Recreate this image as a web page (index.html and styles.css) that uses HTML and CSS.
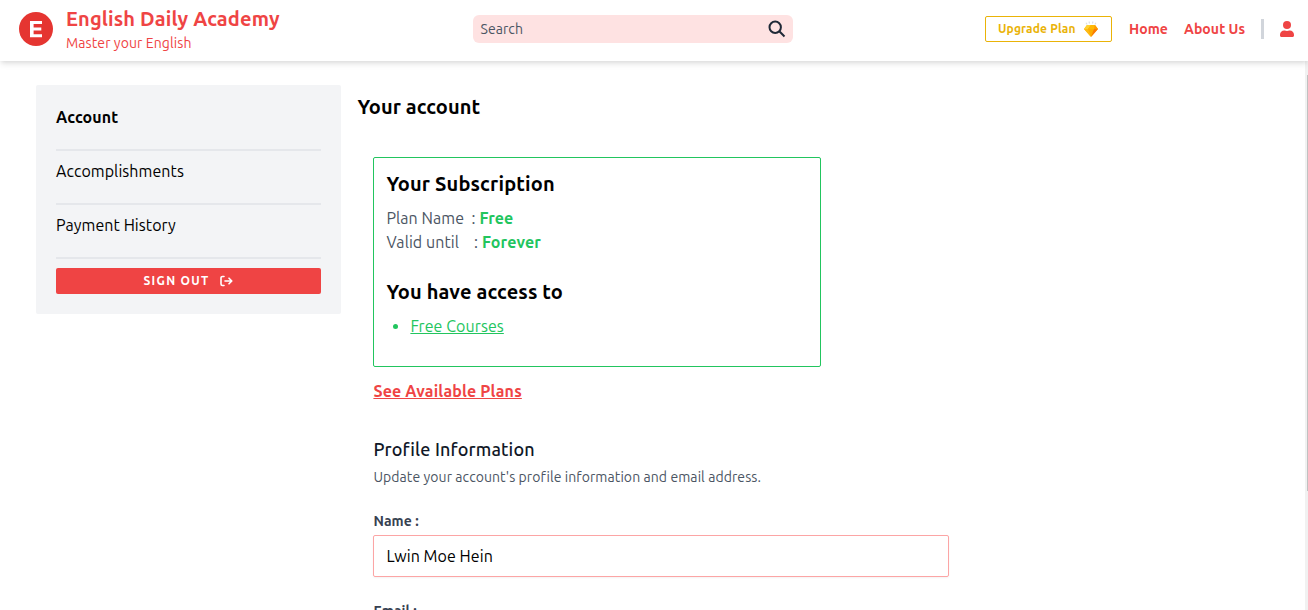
FILE: index.html
```html
<!DOCTYPE html>
<html lang="en">
<head>
<meta charset="utf-8">
<title>English Daily Academy</title>
<link rel="stylesheet" href="styles.css">
</head>
<body>
<header class="topbar">
  <a class="brand">
    <span class="logo"><svg width="34" height="34" viewBox="0 0 34 34"><circle cx="17" cy="17" r="17" fill="#e53531"/><path d="M11 9h12v3h-8.400v3.500h7.700v3h-7.700v3.700H23v3H11z" fill="#fff"/></svg></span>
    <span class="brand-text">
      <span class="brand-name">English Daily Academy</span>
      <span class="brand-tag">Master your English</span>
    </span>
  </a>
  <div class="search">
    <span class="search-label">Search</span>
    <svg width="18" height="18" viewBox="0 0 18 18" fill="none" stroke="#1f2937" stroke-width="2"><circle cx="7.200" cy="7.200" r="5.700"/><path d="M11.300 11.300L16.500 16.500"/></svg>
  </div>
  <nav class="nav">
    <a class="upgrade"><span class="upgrade-label">Upgrade Plan</span>
      <svg width="16" height="17" viewBox="0 0 16 17"><path d="M4.200 3.500L3 1.700M6.500 2.500L6 .5M9.500 2.500L10 .5M11.800 3.500L13 1.700" stroke="#d8dde1" stroke-width="1.100"/><path d="M4 4h8l3 4-7 8-7-8z" fill="#fdad00"/><path d="M4 4h4L5 8H1z" fill="#fdd231"/><path d="M8 4h4l-1 4H5z" fill="#feb804"/><path d="M12 4l3 4h-4z" fill="#ff9a00"/><path d="M11 8h4l-7 8z" fill="#fb7b05"/><path d="M1 8h4l3 8z" fill="#fdbb16"/></svg>
    </a>
    <a class="link home">Home</a>
    <a class="link about">About Us</a>
    <span class="divider"></span>
    <svg class="user" width="14" height="16" viewBox="0 0 448 512" fill="#ef4444"><circle cx="224" cy="128" r="128"/><path d="M313 304h-17c-22 10-46 16-72 16s-50-6-72-16h-17C60 304 0 364 0 438v26c0 27 21 48 48 48h352c27 0 48-21 48-48v-26c0-74-60-134-135-134z"/></svg>
  </nav>
</header>
<main class="page">
  <aside class="sidebar">
    <a class="item active">Account</a>
    <a class="item">Accomplishments</a>
    <a class="item">Payment History</a>
    <button class="signout">SIGN OUT
      <svg width="13" height="12" viewBox="0 0 13 12" fill="none" stroke="#fff" stroke-width="1.600" stroke-linecap="round" stroke-linejoin="round"><path d="M4 1.500H2.500a1.500 1.500 0 0 0-1.500 1.500v6a1.500 1.500 0 0 0 1.500 1.500H4M5 6h6.500M9 3.200L11.800 6 9 8.800"/></svg>
    </button>
  </aside>
  <section class="content">
    <h1 class="heading main">Your account</h1>
    <div class="panel">
      <div class="plan">
        <h2 class="heading">Your Subscription</h2>
        <p class="row first"><span class="key">Plan Name</span><span class="colon">:</span><b>Free</b></p>
        <p class="row"><span class="key wide">Valid until</span><span class="colon">:</span><b>Forever</b></p>
        <h2 class="heading access">You have access to</h2>
        <ul class="courses"><li><a>Free Courses</a></li></ul>
      </div>
      <a class="see">See Available Plans</a>
      <h3 class="profile">Profile Information</h3>
      <p class="hint">Update your account's profile information and email address.</p>
      <label class="label">Name :</label>
      <div class="field">Lwin Moe Hein</div>
      <label class="label">Email :</label>
    </div>
  </section>
  <div class="scrollbar"><div class="thumb"></div></div>
</main>
</body>
</html>
```
FILE: styles.css
```css
* { box-sizing: border-box; margin: 0; padding: 0; }
body { height: 610px; overflow: hidden; background: #fff; color: #000; font: 16px/24px Ubuntu, "Noto Sans", sans-serif; letter-spacing: .07px; white-space: nowrap; }
svg { display: block; flex: none; }
.topbar { position: relative; z-index: 2; display: grid; grid-template-columns: 473px 320px 1fr; height: 61px; background: #fff; box-shadow: 0 4px 6px -1px rgba(0,0,0,.1), 0 2px 4px -1px rgba(0,0,0,.06); }
.brand { display: flex; padding-left: 19px; color: #ef4444; }
.logo { margin: 12px 13px 0 0; }
.brand-text { display: flex; flex-direction: column; padding-top: 5px; }
.brand-name { font-size: 20px; font-weight: 700; line-height: 28px; letter-spacing: .15px; }
.brand-tag { font-size: 14px; line-height: 20px; letter-spacing: .1px; }
.search { display: flex; align-items: center; justify-content: space-between; height: 28px; margin-top: 15px; padding: 0 7px 0 7.500px; border-radius: 6px; background: #fee2e2; color: #4b5563; }
.search-label { font-size: 14px; line-height: 20px; }
.nav { display: flex; height: 58px; align-items: center; justify-content: flex-end; padding-right: 14px; color: #ef4444; }
.upgrade { display: flex; align-items: center; justify-content: space-between; width: 127px; height: 26px; padding: 0 12px; margin-right: 17px; border: 1px solid #eab308; border-radius: 2px; color: #eab308; }
.upgrade-label { font-size: 12px; font-weight: 700; line-height: 16px; letter-spacing: .15px; }
.link { font-size: 14px; font-weight: 700; line-height: 20px; }
.home { width: 55px; }
.about { width: 77px; }
.divider { width: 3px; height: 20px; margin-right: 16px; background: #d1d5db; }
.page { display: flex; height: 549px; padding: 24px 0 0 36px; position: relative; }
.sidebar { flex: none; width: 305px; height: 229px; padding: 20px; border-radius: 2px; background: #f3f4f6; }
.item { display: block; height: 54px; padding-top: 8px; border-bottom: 2px solid #e5e7eb; }
.item.active { height: 46px; padding-top: 0; font-weight: 700; letter-spacing: .12px; }
.signout { display: flex; align-items: center; justify-content: center; width: 265px; height: 26px; margin-top: 9px; gap: 11px; border: 0; border-radius: 2px; background: #ef4444; color: #fff; font: 700 12px/16px Ubuntu, "Noto Sans", sans-serif; letter-spacing: 1.300px; }
.content { width: 640px; padding: 8px 0 0 16.400px; }
.heading { font-size: 20px; font-weight: 700; line-height: 28px; letter-spacing: .14px; }
.heading.main { letter-spacing: .09px; }
.panel { display: flex; flex-direction: column; align-items: flex-start; padding: 36px 0 0 16px; }
.plan { width: 448px; height: 210px; padding: 12px; border: 1px solid #22c55e; border-radius: 2px; }
.row { display: flex; height: 24px; color: #4b5563; }
.row.first { margin-top: 8px; }
.row b { color: #22c55e; letter-spacing: .1px; }
.key { width: 85px; }
.key.wide { width: 87.500px; }
.colon { width: 8px; }
.access { margin-top: 24px; }
.courses { margin-top: 8px; padding-left: 24px; color: #22c55e; }
.courses a { text-decoration: underline; }
.see { margin-top: 12px; color: #ef4444; font-weight: 700; letter-spacing: .15px; text-decoration: underline; }
.profile { margin-top: 32px; color: #111827; font-size: 18px; font-weight: 500; line-height: 28px; letter-spacing: .15px; }
.hint { margin-top: 4px; color: #4b5563; font-size: 14px; line-height: 20px; letter-spacing: .08px; }
.label { margin-top: 24px; color: #374151; font-size: 14px; font-weight: 700; line-height: 20px; }
.field { width: 576px; height: 42px; margin-top: 4px; padding: 8px 12px; border: 1px solid #fca5a5; border-radius: 2px; box-shadow: 0 1px 2px rgba(0,0,0,.05); }
.scrollbar { position: absolute; right: 0; top: 0; width: 3px; height: 549px; padding: 14px 0 0 2px; background: #f1f1f1; }
.thumb { height: 416px; background: #c1c1c1; }
```
